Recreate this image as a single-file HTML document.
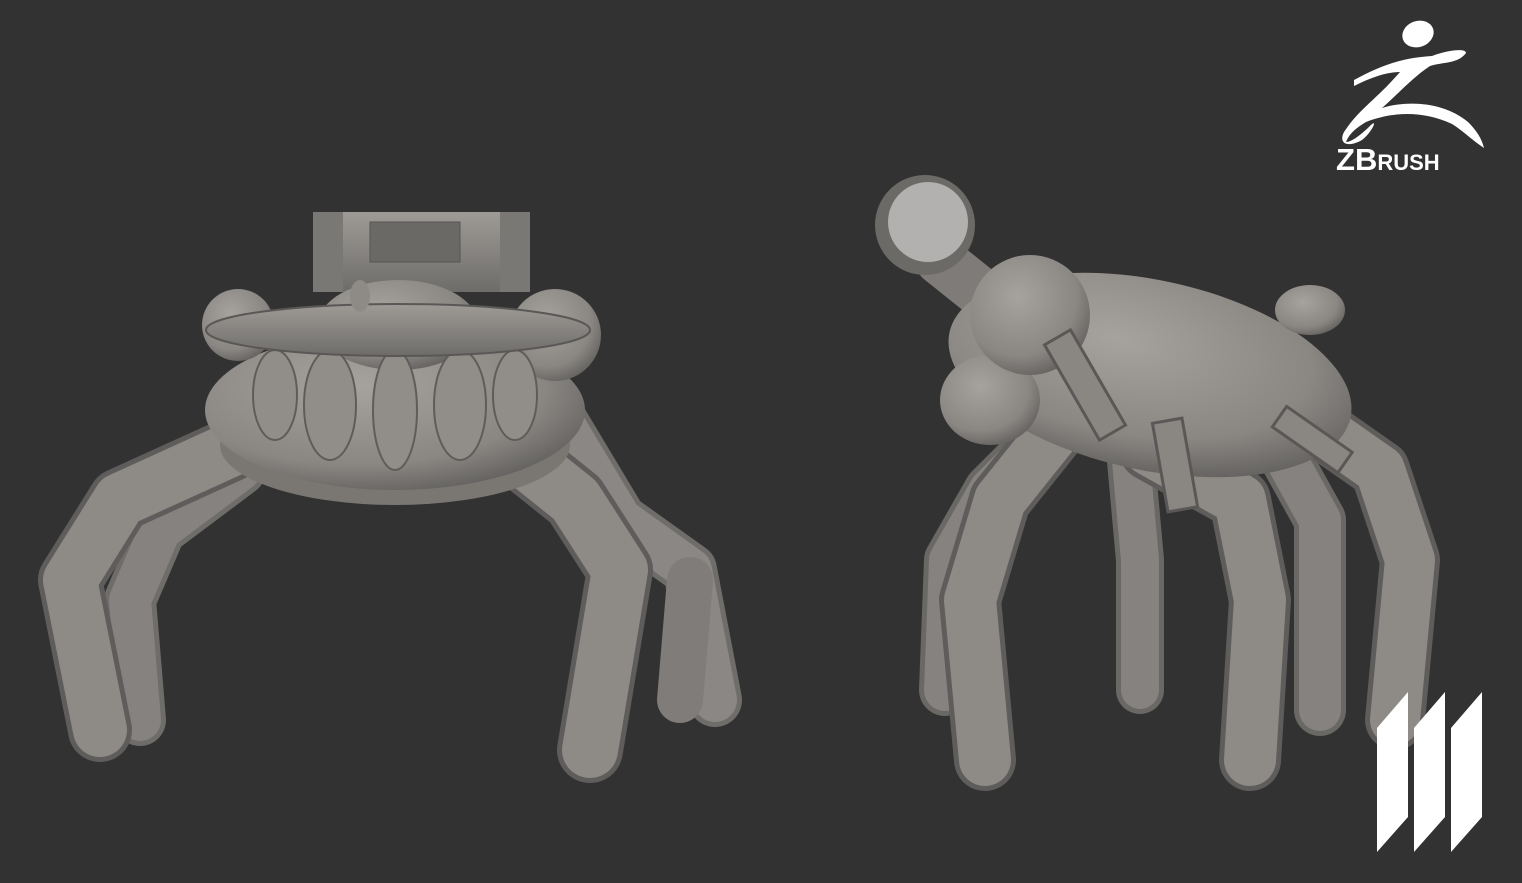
<!DOCTYPE html>
<html><head><meta charset="utf-8"><style>
html,body{margin:0;padding:0;background:#323232;}
svg{display:block}
</style></head><body>
<svg width="1522" height="883" viewBox="0 0 1522 883" xmlns="http://www.w3.org/2000/svg">
<defs>
<radialGradient id="g" cx="40%" cy="35%" r="70%"><stop offset="0" stop-color="#a6a39f"/><stop offset="0.7" stop-color="#8a8783"/><stop offset="1" stop-color="#62605e"/></radialGradient>
<linearGradient id="lg" x1="0" y1="0" x2="0" y2="1"><stop offset="0" stop-color="#9e9b97"/><stop offset="1" stop-color="#6e6c69"/></linearGradient>
</defs>
<rect width="1522" height="883" fill="#323232"/>
<g fill="none" stroke-linecap="round" stroke-linejoin="round">
<path d="M560 420 L620 520 L690 570 L715 700" stroke="#6f6d6a" stroke-width="54"/>
<path d="M560 420 L620 520 L690 570 L715 700" stroke="#8a8784" stroke-width="44"/>
<path d="M240 470 L160 530 L130 600 L140 720" stroke="#6f6d6a" stroke-width="52"/>
<path d="M240 470 L160 530 L130 600 L140 720" stroke="#85827f" stroke-width="42"/>
<path d="M230 450 L120 500 L70 580 L100 730" stroke="#5f5d5b" stroke-width="64"/>
<path d="M230 450 L120 500 L70 580 L100 730" stroke="#8e8b87" stroke-width="54"/>
<path d="M500 440 L575 500 L620 570 L590 750" stroke="#5f5d5b" stroke-width="66"/>
<path d="M500 440 L575 500 L620 570 L590 750" stroke="#8e8b87" stroke-width="56"/>
<path d="M690 580 L680 700" stroke="#7f7c79" stroke-width="46"/>
</g>
<rect x="313" y="212" width="217" height="80" rx="8" fill="url(#lg)"/>
<rect x="370" y="222" width="90" height="40" fill="#6b6966" stroke="#555" />
<rect x="313" y="212" width="30" height="80" fill="#7a7875"/>
<rect x="500" y="212" width="30" height="80" fill="#7a7875"/>
<ellipse cx="395" cy="445" rx="175" ry="60" fill="#7a7773"/>
<ellipse cx="395" cy="410" rx="190" ry="80" fill="url(#g)"/>
<circle cx="555" cy="335" r="46" fill="url(#g)"/>
<circle cx="238" cy="325" r="36" fill="url(#g)"/>
<ellipse cx="398" cy="325" rx="80" ry="45" fill="url(#g)"/>
<g stroke="#5f5d5a" stroke-width="2" fill="#918e8a">
<ellipse cx="275" cy="395" rx="22" ry="45"/>
<ellipse cx="330" cy="405" rx="26" ry="55"/>
<ellipse cx="395" cy="410" rx="22" ry="60"/>
<ellipse cx="460" cy="405" rx="26" ry="55"/>
<ellipse cx="515" cy="395" rx="22" ry="45"/>
</g>
<ellipse cx="398" cy="330" rx="192" ry="26" fill="url(#lg)" stroke="#5a5856" stroke-width="2"/>
<ellipse cx="360" cy="296" rx="10" ry="16" fill="#8e8b87"/>
<g fill="none" stroke-linecap="round" stroke-linejoin="round">
<path d="M1060 420 L990 490 L950 560 L945 690" stroke="#6a6865" stroke-width="52"/>
<path d="M1060 420 L990 490 L950 560 L945 690" stroke="#85827f" stroke-width="42"/>
<path d="M1130 450 L1140 560 L1140 690" stroke="#6a6865" stroke-width="48"/>
<path d="M1130 450 L1140 560 L1140 690" stroke="#85827f" stroke-width="38"/>
<path d="M1270 430 L1320 520 L1320 710" stroke="#6a6865" stroke-width="52"/>
<path d="M1270 430 L1320 520 L1320 710" stroke="#85827f" stroke-width="42"/>
<path d="M1280 400 L1380 470 L1410 560 L1395 720" stroke="#5f5d5b" stroke-width="60"/>
<path d="M1280 400 L1380 470 L1410 560 L1395 720" stroke="#8e8b87" stroke-width="50"/>
<path d="M1150 450 L1240 500 L1260 600 L1250 760" stroke="#5f5d5b" stroke-width="62"/>
<path d="M1150 450 L1240 500 L1260 600 L1250 760" stroke="#8e8b87" stroke-width="52"/>
<path d="M1080 400 L1000 500 L970 600 L985 760" stroke="#5f5d5b" stroke-width="62"/>
<path d="M1080 400 L1000 500 L970 600 L985 760" stroke="#8e8b87" stroke-width="52"/>
<path d="M940 260 L990 300" stroke="#7e7b78" stroke-width="50"/>
</g>
<ellipse cx="1150" cy="375" rx="205" ry="95" transform="rotate(12 1150 375)" fill="url(#g)"/>
<ellipse cx="990" cy="400" rx="50" ry="45" fill="url(#g)"/>
<circle cx="1030" cy="315" r="60" fill="url(#g)"/>
<ellipse cx="1310" cy="310" rx="35" ry="25" fill="url(#g)"/>
<g stroke="#5a5856" stroke-width="3" fill="#8a8783">
<rect x="1070" y="330" width="30" height="110" transform="rotate(-30 1085 385)"/>
<rect x="1160" y="420" width="30" height="90" transform="rotate(-10 1175 465)"/>
<rect x="1300" y="400" width="25" height="80" transform="rotate(-55 1312 440)"/>
</g>
<circle cx="925" cy="225" r="50" fill="#6c6a67"/>
<circle cx="928" cy="222" r="40" fill="#b3b1b0"/>
<g fill="#fff">
<ellipse cx="1418" cy="34" rx="16" ry="13" transform="rotate(-20 1418 34)"/>
<path d="M1354 80 C1380 66 1400 58 1432 56 C1448 50 1466 48 1466 53 C1458 64 1442 62 1430 66 C1412 78 1398 94 1382 108 C1408 100 1444 102 1468 122 C1478 132 1482 140 1484 148 C1472 140 1462 130 1452 124 C1422 110 1392 112 1366 122 C1356 128 1349 134 1346 142 C1352 142 1362 134 1372 124 C1377 120 1372 132 1362 140 C1348 148 1338 144 1344 132 C1360 108 1376 100 1400 72 C1386 72 1370 78 1354 86 Z"/>
</g>
<text x="1336" y="170" font-family="Liberation Sans, sans-serif" font-weight="bold" fill="#fff" font-size="31">Z<tspan>B</tspan><tspan font-size="22">RUSH</tspan></text>
<g fill="#fff">
<polygon points="1377,728 1408,692 1408,817 1377,852"/>
<polygon points="1414,728 1445,692 1445,817 1414,852"/>
<polygon points="1451,728 1482,692 1482,817 1451,852"/>
</g>
</svg>
</body></html>
